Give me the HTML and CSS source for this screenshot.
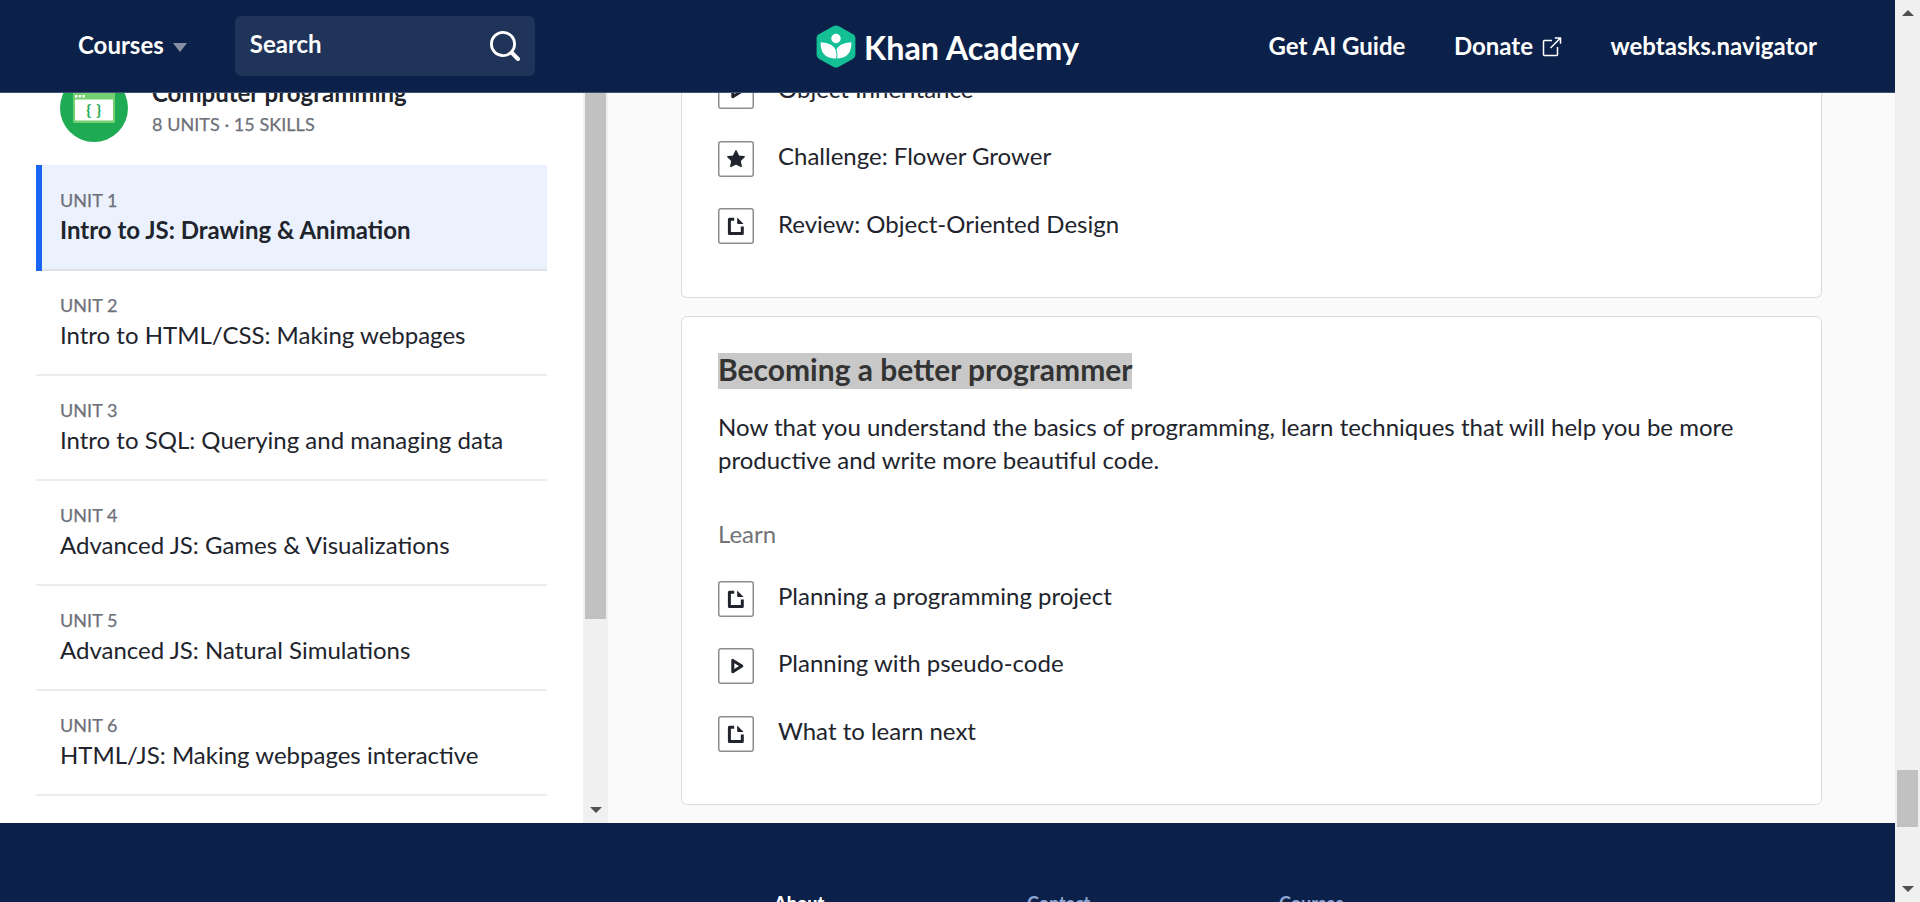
FILE: index.html
```html
<!DOCTYPE html>
<html lang="en">
<head>
<meta charset="utf-8">
<title>Computer programming | Khan Academy</title>
<link rel="stylesheet" href="styles.css">
</head>
<body>
<svg class="defs" width="0" height="0">
  <symbol id="article" viewBox="0 0 36 36">
    <path d="M16.2 11.2H11.4V25.4H24.3V18.5" fill="none" stroke="#21242c" stroke-width="3" stroke-linejoin="round"/>
    <path d="M19.2 9.6L25.6 16H20Q19.2 16 19.2 15.2Z" fill="#21242c"/>
  </symbol>
  <symbol id="video" viewBox="0 0 36 36">
    <path d="M14.8 12.4V23.8L23.8 18.1Z" fill="none" stroke="#21242c" stroke-width="3" stroke-linejoin="round"/>
  </symbol>
  <symbol id="star" viewBox="0 0 36 36">
    <path d="M18 9.8L20.6 15.1L26.2 15.8L22.1 19.8L23.2 25.5L18 22.8L12.8 25.5L13.9 19.8L9.8 15.8L15.4 15.1Z" fill="#21242c" stroke="#21242c" stroke-width="1.4" stroke-linejoin="round"/>
  </symbol>
</svg>
<div class="app">
  <div class="page">
    <header class="header">
      <div class="header-left">
        <a class="courses">Courses <i class="caret"></i></a>
        <div class="search"><span>Search</span>
          <svg width="32" height="32" viewBox="0 0 32 32"><circle cx="14" cy="14" r="11.6"/><path d="M22.5 22.5L29 29" class="handle"/></svg>
        </div>
      </div>
      <a class="brand">
        <svg width="40" height="44" viewBox="0 0 40 44">
          <path d="M17.6 1.1Q20 -.2 22.4 1.1L37.2 9.3Q39.4 10.6 39.4 13V30Q39.4 32.4 37.2 33.7L22.4 41.9Q20 43.2 17.6 41.9L2.8 33.7Q.6 32.4 .6 30V13Q.6 10.6 2.8 9.3Z" fill="#14bf96"/>
          <circle cx="20" cy="13.5" r="4.7" fill="#fff"/>
          <path d="M4.6 17.3Q17 17.6 20 25.5Q23 17.6 35.4 17.3Q36 33.5 20 33.6Q4 33.5 4.6 17.3Z" fill="#fff"/>
          <path d="M20 25Q21.8 29 20.6 33.6" fill="none" stroke="#14bf96" stroke-width="1"/>
        </svg>
        <span>Khan Academy</span>
      </a>
      <nav class="header-right">
        <a>Get AI Guide</a>
        <a class="donate">Donate
          <svg width="20" height="20" viewBox="0 0 20 20"><path d="M10 3.5H2.5Q1.5 3.5 1.5 4.5V17.5Q1.5 18.5 2.5 18.5H14.5Q15.5 18.5 15.5 17.5V10M8.5 11L18.2 1.3M12.8 1H18.5V6.8"/></svg>
        </a>
        <a>webtasks.navigator</a>
      </nav>
    </header>
    <div class="content">
      <aside class="sidebar">
        <div class="nav">
          <div class="course">
            <svg width="68" height="68" viewBox="0 0 68 68">
              <circle cx="34" cy="34" r="34" fill="#1fab54"/>
              <rect x="13" y="15" width="42" height="34" rx="1.5" fill="#74cf70"/>
              <rect x="15" y="25.5" width="38" height="21" fill="#fff"/>
              <path d="M15 21h2.4v2.4h-2.4zM18.7 21h2.4v2.4h-2.4zM22.4 21h2.4v2.4h-2.4z" fill="#fff"/>
              <text x="34" y="40.5" text-anchor="middle" class="braces">{ }</text>
            </svg>
            <div><div class="course-name">Computer programming</div><div class="label">8 UNITS · 15 SKILLS</div></div>
          </div>
          <div class="unit active"><div class="label">UNIT 1</div><div class="name">Intro to JS: Drawing &amp; Animation</div></div>
          <div class="unit"><div class="label">UNIT 2</div><div class="name">Intro to HTML/CSS: Making webpages</div></div>
          <div class="unit"><div class="label">UNIT 3</div><div class="name">Intro to SQL: Querying and managing data</div></div>
          <div class="unit"><div class="label">UNIT 4</div><div class="name">Advanced JS: Games &amp; Visualizations</div></div>
          <div class="unit"><div class="label">UNIT 5</div><div class="name">Advanced JS: Natural Simulations</div></div>
          <div class="unit"><div class="label">UNIT 6</div><div class="name">HTML/JS: Making webpages interactive</div></div>
        </div>
        <div class="side-bar"><div class="thumb"></div><i class="arrow down"></i></div>
      </aside>
      <main class="main">
        <section class="card first">
          <a class="row"><svg class="icon"><use href="#video"/></svg><span>Object Inheritance</span></a>
          <a class="row"><svg class="icon"><use href="#star"/></svg><span>Challenge: Flower Grower</span></a>
          <a class="row"><svg class="icon"><use href="#article"/></svg><span>Review: Object-Oriented Design</span></a>
        </section>
        <section class="card second">
          <h2><span>Becoming a better programmer</span></h2>
          <p>Now that you understand the basics of programming, learn techniques that will help you be more productive and write more beautiful code.</p>
          <h3>Learn</h3>
          <a class="row"><svg class="icon"><use href="#article"/></svg><span>Planning a programming project</span></a>
          <a class="row"><svg class="icon"><use href="#video"/></svg><span>Planning with pseudo-code</span></a>
          <a class="row"><svg class="icon"><use href="#article"/></svg><span>What to learn next</span></a>
        </section>
      </main>
    </div>
    <footer class="footer"><b>About</b><span>Contact</span><span>Courses</span></footer>
  </div>
  <div class="page-bar"><i class="arrow up"></i><div class="thumb"></div><i class="arrow down"></i></div>
</div>
</body>
</html>
```
FILE: styles.css
```css
* { box-sizing: border-box; }
body { margin: 0; font-family: Lato, "Liberation Sans", sans-serif; font-size: 24px; color: #21242c; }
.defs { position: absolute; }
.app { display: flex; width: 1920px; height: 902px; overflow: hidden; }
.page { display: flex; flex-direction: column; width: 1895px; height: 902px; overflow: hidden; }

.header { display: grid; grid-template-columns: 1fr auto 1fr; align-items: center; height: 93px; flex: none; padding: 0 78px; background: #0c2149; border-bottom: 1px solid #3f5075; color: #fff; font-weight: 700; white-space: nowrap; }
.header-left { display: flex; align-items: center; gap: 48px; }
.courses { display: flex; align-items: center; gap: 9px; padding-bottom: 3px; }
.caret { margin-top: 5px; border: solid transparent; border-width: 9px 7.5px 0; border-top-color: #868fa4; }
.search { display: flex; align-items: center; justify-content: space-between; width: 300px; height: 60px; padding: 0 14px 0 15px; border-radius: 6px; background: #203358; }
.search span { padding-bottom: 5px; }
.search svg { fill: none; stroke: #fff; stroke-width: 2.8; }
.search .handle { stroke-width: 4; stroke-linecap: round; }
.brand { display: flex; align-items: center; gap: 8px; padding-top: 2px; font-size: 32.3px; }
.header-right { display: flex; justify-content: flex-end; gap: 48.5px; padding-bottom: 2px; }
.donate { display: flex; align-items: center; gap: 9px; }
.donate svg { fill: none; stroke: #fff; stroke-width: 1.5; margin-top: 4px; }

.content { display: flex; height: 730px; flex: none; overflow: hidden; }
.sidebar { display: flex; width: 608px; background: #fff; }
.nav { flex: 1; padding: 0 36px; overflow: hidden; }
.course { display: flex; gap: 24px; height: 72px; padding-left: 24px; }
.course svg { flex: none; margin-top: -19px; }
.course-name { margin-top: -15px; font-weight: 700; line-height: 30px; }
.label { font-size: 18px; line-height: 24px; color: #6e7079; -webkit-text-stroke: .25px #6e7079; letter-spacing: .05px; }
.course .label { margin-top: 4px; }
.braces { font: 700 16px Lato, sans-serif; fill: #1fab54; letter-spacing: .6px; }
.unit { height: 105px; padding: 22px 24px 0; border-bottom: 2px solid #ededee; white-space: nowrap; }
.name { margin-top: 3px; line-height: 30px; }
.active { height: 106px; padding-top: 23px; border-bottom: 0; background: linear-gradient(90deg, #1865f2 6px, transparent 6px), linear-gradient(#ebf2fe 104px, #dce1ec 104px); }
.active .name { font-weight: 700; }
.side-bar { display: flex; flex-direction: column; align-items: center; width: 25px; background: #f0f0f0; }
.side-bar .thumb { width: 21px; height: 526px; background: #c1c1c1; }
.side-bar .down { margin-top: 188px; }
.arrow { border: 6px solid transparent; }
.down { border-width: 6px 6px 0; border-top-color: #505050; }
.up { border-width: 0 6px 6px; border-bottom-color: #505050; }

.main { flex: 1; padding: 0 73px 18px; background: #fafafa; }
.card { width: 1141px; padding: 0 36px; border: 1px solid #dbdbdd; border-radius: 6px; background: #fff; }
.first { height: 205px; border-top: 0; border-radius: 0 0 6px 6px; overflow: hidden; }
.first .row:first-child { margin-top: -20px; }
.second { height: 489px; margin-top: 18px; padding-top: 36px; }
h2 { display: flex; margin: 0; font-size: 30px; line-height: 32px; color: #333; }
h2 span { height: 36px; background: #c8c8c8; }
p { margin: 21px 0 0; line-height: 33px; }
h3 { margin: 43px 0 31.6px; font-size: 24px; font-weight: 400; line-height: 30px; color: #717378; }
.row { display: flex; align-items: center; gap: 24px; height: 36px; margin-bottom: 31.5px; }
.row span { padding-bottom: 6px; }
.second .row span { padding-bottom: 7px; }
.icon { width: 36px; height: 36px; border-radius: 3px; box-shadow: inset 0 0 0 1.5px #8b8d93; }

.footer { display: grid; grid-template-columns: 253px 252px 253px; height: 79px; padding: 68px 0 0 774px; background: #0c2149; color: #8fa6d3; font-size: 18px; line-height: 24px; font-weight: 700; }
.footer b { color: #fff; }

.page-bar { display: flex; flex-direction: column; align-items: center; width: 25px; padding-top: 10px; background: #f0f0f0; }
.page-bar .thumb { width: 21px; height: 57px; margin: 754px 0 59px; background: #c1c1c1; }
```
